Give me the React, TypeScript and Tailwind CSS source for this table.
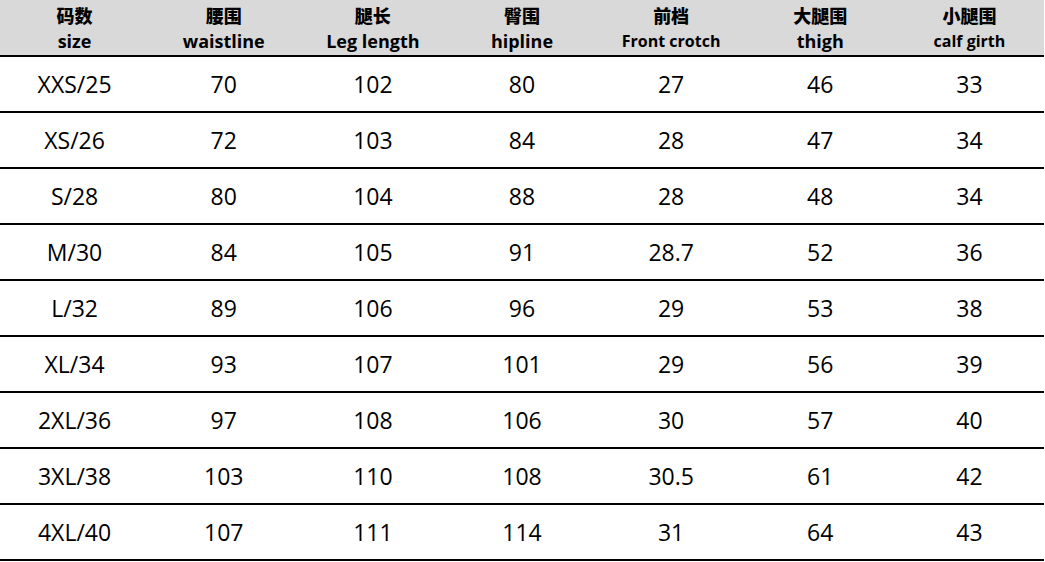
const headers: { cn: string; en: string; small?: boolean }[] = [
  { cn: "码数", en: "size" },
  { cn: "腰围", en: "waistline" },
  { cn: "腿长", en: "Leg length" },
  { cn: "臀围", en: "hipline" },
  { cn: "前档", en: "Front crotch", small: true },
  { cn: "大腿围", en: "thigh" },
  { cn: "小腿围", en: "calf girth", small: true },
];

const rows: string[][] = [
  ["XXS/25", "70", "102", "80", "27", "46", "33"],
  ["XS/26", "72", "103", "84", "28", "47", "34"],
  ["S/28", "80", "104", "88", "28", "48", "34"],
  ["M/30", "84", "105", "91", "28.7", "52", "36"],
  ["L/32", "89", "106", "96", "29", "53", "38"],
  ["XL/34", "93", "107", "101", "29", "56", "39"],
  ["2XL/36", "97", "108", "106", "30", "57", "40"],
  ["3XL/38", "103", "110", "108", "30.5", "61", "42"],
  ["4XL/40", "107", "111", "114", "31", "64", "43"],
];

export default function App() {
  return (
    <div
      className="w-[1045px] h-[562px] bg-white text-black overflow-hidden"
      style={{ fontFamily: '"Open Sans", "Noto Sans CJK SC", sans-serif' }}
    >
      <div className="w-[1044px]">
        {/* header */}
        <div className="grid grid-cols-7 h-[57px] bg-[#d9d9d9] border-b-2 border-black">
          {headers.map((h) => (
            <div key={h.en} className="flex flex-col items-center justify-center font-bold leading-[26px]">
              <span className="text-[18px] font-black" style={{ fontFamily: '"Noto Sans CJK SC", sans-serif' }}>
                {h.cn}
              </span>
              <span className={h.small ? "text-[16px]" : "text-[18px]"}>{h.en}</span>
            </div>
          ))}
        </div>
        {rows.map((r) => (
          <div key={r[0]} className="grid grid-cols-7 h-[56px] border-b-2 border-black">
            {r.map((c, i) => (
              <div key={i} className="flex items-center justify-center text-[23px]">
                {c}
              </div>
            ))}
          </div>
        ))}
      </div>
    </div>
  );
}
